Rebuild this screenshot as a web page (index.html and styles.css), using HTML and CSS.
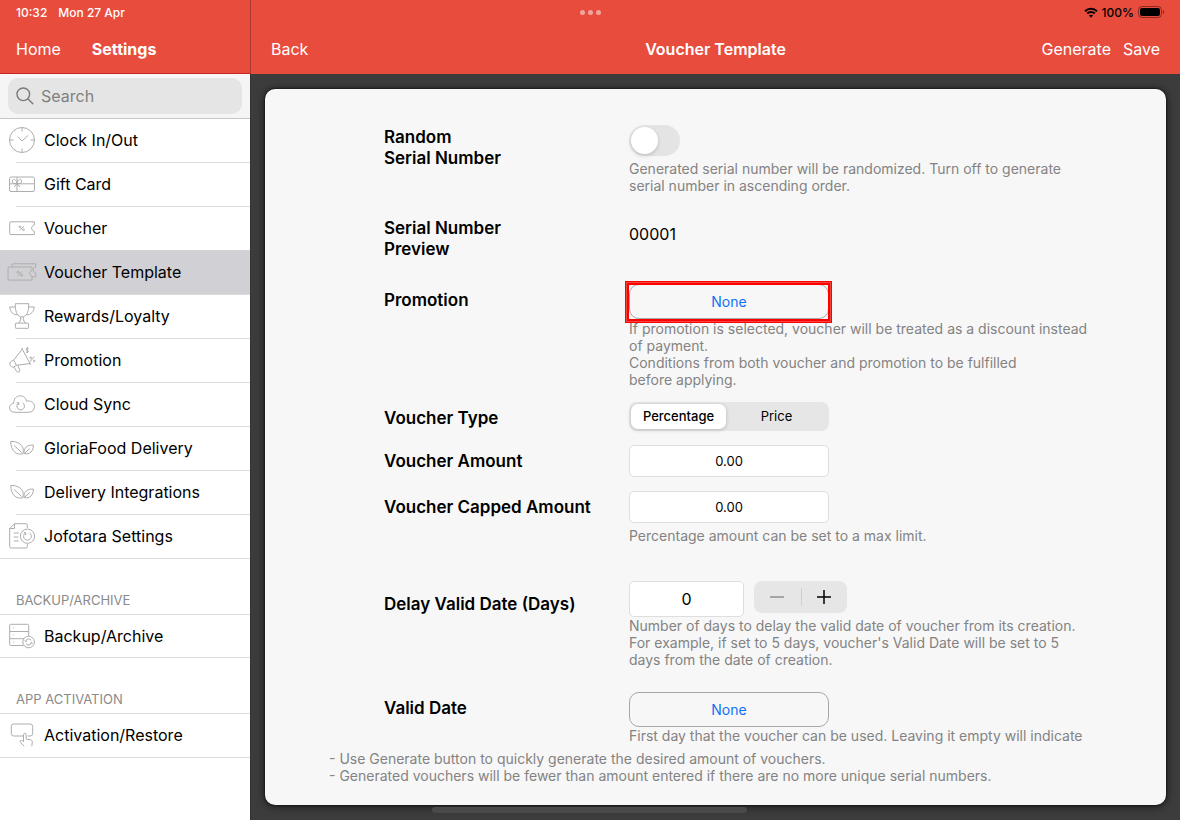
FILE: index.html
```
<!DOCTYPE html>
<html lang="en">
<head>
    <meta charset="UTF-8">
    <meta name="viewport" content="width=device-width, initial-scale=1.0">
    <title>Voucher Template</title>
    <link rel="stylesheet" href="styles.css">
</head>
<body>
    <div class="status-bar">
        <div class="status-time"><span>10:32</span><span>Mon 27 Apr</span></div>
        <div class="dots"><i></i><i></i><i></i></div>
        <div class="status-right">
            <svg width="14" height="11" viewBox="0 0 14 11" fill="none" stroke="#000" stroke-width="2">
                <path d="M1 4.2C4.4.9 9.6.9 13 4.2"/>
                <path d="M3.2 6.6c2.2-2 5.4-2 7.6 0"/>
                <path d="M7 10.8L4.9 8.6c1.2-1 3-1 4.200 0z" fill="#000" stroke="none"/>
            </svg>
            <span>100%</span>
            <svg width="27" height="12" viewBox="0 0 27 12">
                <rect x=".5" y=".5" width="23" height="11" rx="3.500" fill="none" stroke="#000" stroke-opacity=".4"/>
                <rect x="2" y="2" width="20" height="8" rx="2" fill="#000"/>
                <path d="M25 4v4c1.600-.6 1.600-3.400 0-4z" fill="#000" fill-opacity=".5"/>
            </svg>
        </div>
    </div>

    <div class="app">
        <aside class="sidebar">
            <header class="bar">
                <a href="#">Home</a>
                <h2>Settings</h2>
            </header>
            <div class="search">
                <label class="search-box">
                    <svg width="18" height="18" viewBox="0 0 18 18" fill="none" stroke="#7b7b7b" stroke-width="1.400" stroke-linecap="round">
                        <circle cx="7.300" cy="7.300" r="6.300"/>
                        <path d="M12 12l4.800 4.800"/>
                    </svg>
                    <input type="search" placeholder="Search" aria-label="Search">
                </label>
            </div>
            <nav class="menu">
                <a href="#" class="item">
                    <svg class="icon" viewBox="0 0 26 26">
                        <circle cx="13" cy="13" r="12.500"/>
                        <path d="M13 .5v4M13 21.500v4M.5 13h4M21.500 13h4M8.700 9.700L13 14l6.300-5.700"/>
                    </svg>
                    <span>Clock In/Out</span>
                </a>
                <a href="#" class="item">
                    <svg class="icon" viewBox="0 0 26 26">
                        <rect x=".5" y="6" width="25" height="14.500" rx="1.500"/>
                        <path d="M.5 12.800h25M8 6v14.500M8 12.800C5 13 3 12 3.400 9.800c.4-2.300 4-2 4.600 3M8 12.800c3 .2 5-.8 4.600-3-.4-2.300-4-2-4.600 3M8 12.800l-3 3.200M8 12.800l3 3.200"/>
                    </svg>
                    <span>Gift Card</span>
                </a>
                <a href="#" class="item">
                    <svg class="icon" viewBox="0 0 26 26">
                        <path d="M2 6.800h23.300v3.400c-3.600.6-3.600 5.400 0 6v3.400H2a1.300 1.300 0 0 1-1.300-1.300V8.100A1.300 1.300 0 0 1 2 6.800z"/>
                        <path d="M14.800 11.200l-4 4.200"/><circle cx="11" cy="12" r=".9"/><circle cx="14.500" cy="14.700" r=".9"/>
                    </svg>
                    <span>Voucher</span>
                </a>
                <a href="#" class="item active">
                    <svg class="icon" viewBox="0 0 26 26">
                        <path d="M.2 8h22.800v3.500c-3.200.6-3.200 5 0 5.600v4H.2A1.200 1.200 0 0 1-1 19.900V9.200A1.200 1.200 0 0 1 .2 8z"/>
                        <path d="M3 8V6a1.200 1.200 0 0 1 1.200-1.200h22.500v3.500c-3.200.6-3.200 5 0 5.600v4H23"/>
                        <path d="M12.800 12.500l-4 4.400"/><circle cx="9" cy="13.200" r="1"/><circle cx="12.600" cy="16.200" r="1"/>
                    </svg>
                    <span>Voucher Template</span>
                </a>
                <a href="#" class="item">
                    <svg class="icon" viewBox="0 0 26 26">
                        <path d="M6.300.7h13.400c.2 6.800-1.200 11.600-5.400 13.200h-2.600C7.500 12.300 6.100 7.500 6.300.7z"/>
                        <path d="M6.400 4H.7c.6 4.800 3.300 7.800 7.800 7.800M19.600 4h5.700c-.6 4.800-3.300 7.800-7.800 7.800M11.700 13.900v3l-2 3.200M14.300 13.900v3l2 3.200"/>
                        <rect x="6.400" y="20.100" width="13.200" height="5.200" rx=".6"/>
                    </svg>
                    <span>Rewards/Loyalty</span>
                </a>
                <a href="#" class="item">
                    <svg class="icon" viewBox="0 0 26 26">
                        <path d="M13.300 2.200L21 16.500 7.500 18.300 4.700 13z"/>
                        <path d="M4.700 13l-2.500 1.300C-.7 16 1.200 20.900 4.800 20l2.700-1.700M4.800 20l3 4.500c.8 1.600 3.600.2 2.900-1.500l-2-4.800M12.300 2l1.700-.7M20.700 17.500l1.300-.8"/>
                        <path d="M19.500 1.500c-2.300-1-3.300 1.200-1.500 1.700 2.400.5 1.600 3-1 1.900M18.300 0v6M25.300 9.500L21 14.800"/>
                        <circle cx="21.800" cy="10.800" r=".8"/><circle cx="25.200" cy="14" r=".8"/>
                    </svg>
                    <span>Promotion</span>
                </a>
                <a href="#" class="item">
                    <svg class="icon" viewBox="0 0 26 26">
                        <path d="M5.800 21.300c-6.500 0-7.200-8.200-1-9.200C4.500 3.200 16 2.300 17.600 10.200c3.400-1 7.900 1 7.900 5.300 0 3.200-2.100 5.800-5.800 5.800z"/>
                        <path d="M13.600 11.800a3.800 3.800 0 1 1-4 .1M9.700 14v-2.300h-2"/>
                    </svg>
                    <span>Cloud Sync</span>
                </a>
                <a href="#" class="item">
                    <svg class="icon" viewBox="0 0 26 26">
                        <path d="M1.700 6.500c6-.3 14.500 2.500 12.300 12.300-7 1.500-12-2.800-12.300-12.300zM5.200 10.500l7.500 7M15.200 18.500c-.8-5.700 3-8.600 9.100-8.500.5 5.800-3.600 10.200-9.100 8.500zM15.200 18.500l5.500-4.800"/>
                    </svg>
                    <span>GloriaFood Delivery</span>
                </a>
                <a href="#" class="item">
                    <svg class="icon" viewBox="0 0 26 26">
                        <path d="M1.700 6.500c6-.3 14.500 2.500 12.300 12.300-7 1.500-12-2.800-12.300-12.300zM5.200 10.500l7.500 7M15.200 18.500c-.8-5.700 3-8.600 9.100-8.500.5 5.800-3.600 10.200-9.100 8.500zM15.200 18.500l5.500-4.800"/>
                    </svg>
                    <span>Delivery Integrations</span>
                </a>
                <a href="#" class="item last">
                    <svg class="icon" viewBox="0 0 26 26">
                        <path d="M18.300 5V2A1.300 1.300 0 0 0 17 .7H5.500L.7 5.500v18.200a1.300 1.300 0 0 0 1.300 1.300h15a1.300 1.300 0 0 0 1.300-1.300V21M5.500.7v4.800H.7M4.700 10h5M4.700 14h4.500M4.700 18h5"/>
                        <circle cx="18.500" cy="13.200" r="7.100"/>
                        <path d="M20.300 9.800a3.900 3.900 0 1 1-3.600 0M16.700 12V9.700h-2"/>
                    </svg>
                    <span>Jofotara Settings</span>
                </a>

                <h3>BACKUP/ARCHIVE</h3>
                <a href="#" class="item last short">
                    <svg class="icon" viewBox="0 0 26 26">
                        <path d="M19.700 13V2.300a1 1 0 0 0-1-1h-17a1 1 0 0 0-1 1v19.200a1 1 0 0 0 1 1h12.500M.7 8.500h19M.7 15.700h14.500M4.200 4.700h.8M4.200 12h.8M4.200 19h.8"/>
                        <circle cx="19.600" cy="19" r="5.800"/>
                        <path d="M16.700 18.300a3 3 0 0 1 5.500-.9M22.500 19.700a3 3 0 0 1-5.500.9M15.700 17.500l1 1.200 1.300-.9M23.500 20.500l-1-1.200-1.300.9"/>
                    </svg>
                    <span>Backup/Archive</span>
                </a>

                <h3>APP ACTIVATION</h3>
                <a href="#" class="item last">
                    <svg class="icon" viewBox="0 0 26 26">
                        <path d="M14 14H4.800a2.500 2.500 0 0 1-2.500-2.500v-7A2.500 2.500 0 0 1 4.800 2h16.400a2.500 2.500 0 0 1 2.500 2.500v7a2.500 2.500 0 0 1-2.500 2.500h-2.500"/>
                        <path d="M14.500 20v-7.500c0-1.700 2.700-1.700 2.700 0V17l4.300.8c1.200.3 1.800 1 1.800 2.200l-.5 4.300M14.500 18l-1.300 1c-.8-1-2.700-.5-2.200.8l4.200 4.500"/>
                    </svg>
                    <span>Activation/Restore</span>
                </a>
            </nav>
        </aside>

        <main class="detail">
            <header class="bar">
                <a href="#">Back</a>
                <h1>Voucher Template</h1>
                <div class="actions">
                    <button type="button">Generate</button>
                    <button type="button">Save</button>
                </div>
            </header>
            <div class="stage">
                <div class="card">
                    <form class="form">
                        <div class="row row-switch">
                            <label class="name" for="random">Random<br>Serial Number</label>
                            <div>
                                <input type="checkbox" id="random" class="switch">
                                <p class="hint">Generated serial number will be randomized. Turn off to generate<br>serial number in ascending order.</p>
                            </div>
                        </div>
                        <div class="row row-preview">
                            <label class="name" for="serial">Serial Number<br>Preview</label>
                            <output id="serial">00001</output>
                        </div>
                        <div class="row">
                            <label class="name name-control" for="promo">Promotion</label>
                            <div>
                                <div class="marked">
                                    <button type="button" id="promo" class="pick">None</button>
                                </div>
                                <p class="hint">If promotion is selected, voucher will be treated as a discount instead<br>of payment.<br>Conditions from both voucher and promotion to be fulfilled<br>before applying.</p>
                            </div>
                        </div>
                        <div class="row">
                            <span class="name name-control" id="type-label">Voucher Type</span>
                            <div class="segments" role="radiogroup" aria-labelledby="type-label">
                                <label><input type="radio" name="type" checked><span>Percentage</span></label>
                                <label><input type="radio" name="type"><span>Price</span></label>
                            </div>
                        </div>
                        <div class="row">
                            <label class="name name-control" for="amount">Voucher Amount</label>
                            <div><input type="text" id="amount" class="field" value="0.00"></div>
                        </div>
                        <div class="row row-capped">
                            <label class="name name-control" for="capped">Voucher Capped Amount</label>
                            <div>
                                <input type="text" id="capped" class="field" value="0.00">
                                <p class="hint">Percentage amount can be set to a max limit.</p>
                            </div>
                        </div>
                        <div class="row row-delay">
                            <label class="name name-days" for="days">Delay Valid Date (Days)</label>
                            <div>
                                <div class="days">
                                    <input type="text" id="days" class="field" value="0">
                                    <div class="stepper">
                                        <button type="button" aria-label="Decrease" disabled><svg width="16" height="16" viewBox="0 0 16 16"><path d="M1 8h14"/></svg></button>
                                        <button type="button" aria-label="Increase"><svg width="16" height="16" viewBox="0 0 16 16"><path d="M1 8h14M8 1v14"/></svg></button>
                                    </div>
                                </div>
                                <p class="hint">Number of days to delay the valid date of voucher from its creation.<br>For example, if set to 5 days, voucher's Valid Date will be set to 5<br>days from the date of creation.</p>
                            </div>
                        </div>
                        <div class="row">
                            <label class="name name-control" for="valid">Valid Date</label>
                            <div>
                                <button type="button" id="valid" class="pick">None</button>
                                <p class="hint">First day that the voucher can be used. Leaving it empty will indicate</p>
                            </div>
                        </div>
                    </form>
                    <p class="hint notes">- Use Generate button to quickly generate the desired amount of vouchers.<br>- Generated vouchers will be fewer than amount entered if there are no more unique serial numbers.</p>
                </div>
                <div class="home-indicator"></div>
            </div>
        </main>
    </div>
</body>
</html>
```
FILE: styles.css
```
* {
    box-sizing: border-box;
}
body {
    margin: 0;
    font-family: Inter, "Liberation Sans", sans-serif;
    font-size: 16px;
    color: #000;
    background-color: #3c3c3c;
}
a {
    color: inherit;
    text-decoration: none;
}
button, input {
    font-family: inherit;
    margin: 0;
}
h1, h2, h3, p {
    margin: 0;
}

/* status bar, sits over both headers */
.status-bar {
    position: absolute;
    top: 0;
    left: 0;
    right: 0;
    height: 24px;
    padding: 0 15px 0 16px;
    display: grid;
    grid-template-columns: 1fr auto 1fr;
    align-items: center;
    font-size: 12px;
    font-weight: 500;
}
.status-time {
    display: flex;
    gap: 11px;
    color: #fff;
}
.dots {
    display: flex;
    gap: 3px;
}
.dots i {
    width: 5px;
    height: 5px;
    border-radius: 50%;
    background-color: #f3a59d;
}
.status-right {
    display: flex;
    justify-content: flex-end;
    align-items: center;
    gap: 4px;
}

.app {
    display: flex;
    height: 100vh;
}
.bar {
    flex: none;
    display: flex;
    align-items: center;
    height: 74px;
    padding: 24px 20px 0;
    background-color: #e84c3d;
    color: #fff;
    font-size: 16px;
}
.bar h1, .bar h2 {
    font-size: 16px;
    font-weight: 600;
}
.bar h2 {
    font-weight: 700;
}

/* sidebar */
.sidebar {
    flex: none;
    width: 250px;
    display: flex;
    flex-direction: column;
    background-color: #fff;
}
.sidebar .bar {
    gap: 31px;
    padding-left: 16px;
    border-bottom: 1px solid #c4271b;
}
.search {
    padding: 4px 8px;
    background-color: #f5f5f5;
    border-bottom: 1px solid #c6c6c6;
}
.search-box {
    display: flex;
    align-items: center;
    gap: 7px;
    height: 36px;
    padding: 0 8px;
    border-radius: 10px;
    background-color: #e5e5e5;
}
.search-box svg {
    flex: none;
}
.search-box input {
    width: 100%;
    padding: 0;
    border: 0;
    outline: 0;
    background: none;
    font-size: 16px;
}
.search-box input::placeholder {
    color: #808080;
}
.item {
    position: relative;
    display: flex;
    align-items: center;
    gap: 9px;
    height: 44px;
    padding: 0 0 2px 9px;
}
.item.short {
    height: 43px;
}
.item::after {
    content: "";
    position: absolute;
    left: 16px;
    right: 0;
    bottom: 0;
    height: 1px;
    background-color: #dcdcdc;
}
.item.last::after, .item.active::after {
    left: 0;
}
.item.active {
    background-color: #d1d0d5;
    box-shadow: 0 -1px #d1d0d5;
}
.icon {
    flex: none;
    width: 26px;
    height: 26px;
    overflow: visible;
    fill: none;
    stroke: #adadad;
    stroke-width: 1;
    stroke-linejoin: round;
}
.menu h3 {
    height: 56px;
    padding: 31px 16px 0;
    border-bottom: 1px solid #dcdcdc;
    color: #8a8a8a;
    font-size: 13px;
    font-weight: 400;
    line-height: 20px;
}

/* detail pane */
.detail {
    flex: 1;
    display: flex;
    flex-direction: column;
    min-width: 0;
}
.detail .bar {
    display: grid;
    grid-template-columns: 1fr auto 1fr;
    border-left: 1px solid #a83a30;
}
.actions {
    display: flex;
    justify-content: flex-end;
    gap: 12px;
}
.actions button {
    padding: 0;
    border: 0;
    background: none;
    color: #fff;
    font-size: 16px;
}
.stage {
    flex: 1;
    min-height: 0;
    display: flex;
    flex-direction: column;
    padding: 15px 14px 7px;
    border-left: 1px solid #333;
}
.card {
    flex: 1;
    min-height: 0;
    display: flex;
    flex-direction: column;
    padding-bottom: 21px;
    border-radius: 10px;
    background-color: #f7f7f7;
    box-shadow: 0 0 2px #000, 0 1px 8px rgba(0, 0, 0, 0.7);
}
.home-indicator {
    width: 315px;
    height: 6px;
    margin: 2px 0 0 167px;
    border-radius: 3px;
    background-color: #494949;
}
.form {
    flex: 1;
    min-height: 0;
    overflow: hidden;
    padding: 36px 60px 0 119px;
}
.row {
    display: grid;
    grid-template-columns: 245px 1fr;
    align-items: start;
    margin-bottom: 14px;
}
.row-switch {
    margin-bottom: 22px;
}
.row-preview {
    margin-bottom: 24px;
}
.row-capped {
    margin-bottom: 37px;
}
.row-delay {
    margin-bottom: 24px;
}
.name {
    padding-top: 2px;
    font-size: 17px;
    font-weight: 600;
    line-height: 21px;
}
.name-control {
    padding-top: 6px;
}
.name-days {
    padding-top: 13px;
}
.hint {
    color: #838383;
    font-size: 14px;
    line-height: 17px;
    white-space: nowrap;
}
.row-switch .hint, .row-capped .hint {
    margin-top: 4px;
}
.switch {
    appearance: none;
    display: block;
    width: 51px;
    height: 31px;
    padding: 2px;
    border-radius: 16px;
    background-color: #e4e4e4;
}
.switch::before {
    content: "";
    display: block;
    width: 27px;
    height: 27px;
    border-radius: 50%;
    background-color: #fff;
    box-shadow: 0 2px 4px rgba(0, 0, 0, 0.15);
}
.switch:checked {
    background-color: #34c759;
}
.switch:checked::before {
    margin-left: 20px;
}
output {
    padding-top: 8px;
    font-size: 16px;
    line-height: 21px;
}
.pick {
    display: block;
    width: 200px;
    height: 35px;
    padding: 0;
    border: 1px solid #a8a8a8;
    border-radius: 10px;
    background: none;
    color: #0f73f5;
    font-size: 14px;
}
/* red frame round the promotion button */
.marked {
    position: relative;
    width: 200px;
    height: 36px;
}
.marked::after {
    content: "";
    position: absolute;
    inset: -3px -3px -3px -4px;
    border: 1px solid #f00;
    box-shadow: inset 0 0 0 1px #f2453b, inset 0 0 0 3px #f00;
    pointer-events: none;
}
.segments {
    display: flex;
    width: 200px;
    height: 29px;
    padding: 2px;
    border-radius: 8px;
    background-color: #e6e6e6;
}
.segments label {
    display: flex;
    width: 95px;
}
.segments label + label {
    flex: 1;
}
.segments input {
    appearance: none;
    width: 0;
    height: 0;
}
.segments span {
    flex: 1;
    border-radius: 7px;
    font-size: 13px;
    line-height: 25px;
    text-align: center;
}
.segments input:checked + span {
    background-color: #fff;
    box-shadow: 0 1px 4px rgba(0, 0, 0, 0.2);
    font-weight: 500;
}
.field {
    display: block;
    width: 200px;
    height: 32px;
    padding: 0;
    border: 1px solid #dedede;
    border-radius: 5px;
    background-color: #fff;
    font-size: 13px;
    text-align: center;
}
.days {
    display: flex;
    align-items: flex-start;
    gap: 10px;
}
.days .field {
    width: 115px;
    height: 36px;
    font-size: 16px;
}
.stepper {
    display: flex;
    width: 93px;
    height: 32px;
    border-radius: 8px;
    background-color: #e6e6e6;
}
.stepper button {
    position: relative;
    flex: 1;
    display: flex;
    align-items: center;
    justify-content: center;
    padding: 0;
    border: 0;
    background: none;
}
.stepper svg {
    fill: none;
    stroke: #000;
    stroke-width: 1.5;
}
.stepper button:disabled svg {
    stroke: #8e8e8e;
}
.stepper button + button::before {
    content: "";
    position: absolute;
    left: 0;
    width: 1px;
    height: 18px;
    background-color: #cfcfcf;
}
.notes {
    padding: 6px 20px 0 64px;
}
```
